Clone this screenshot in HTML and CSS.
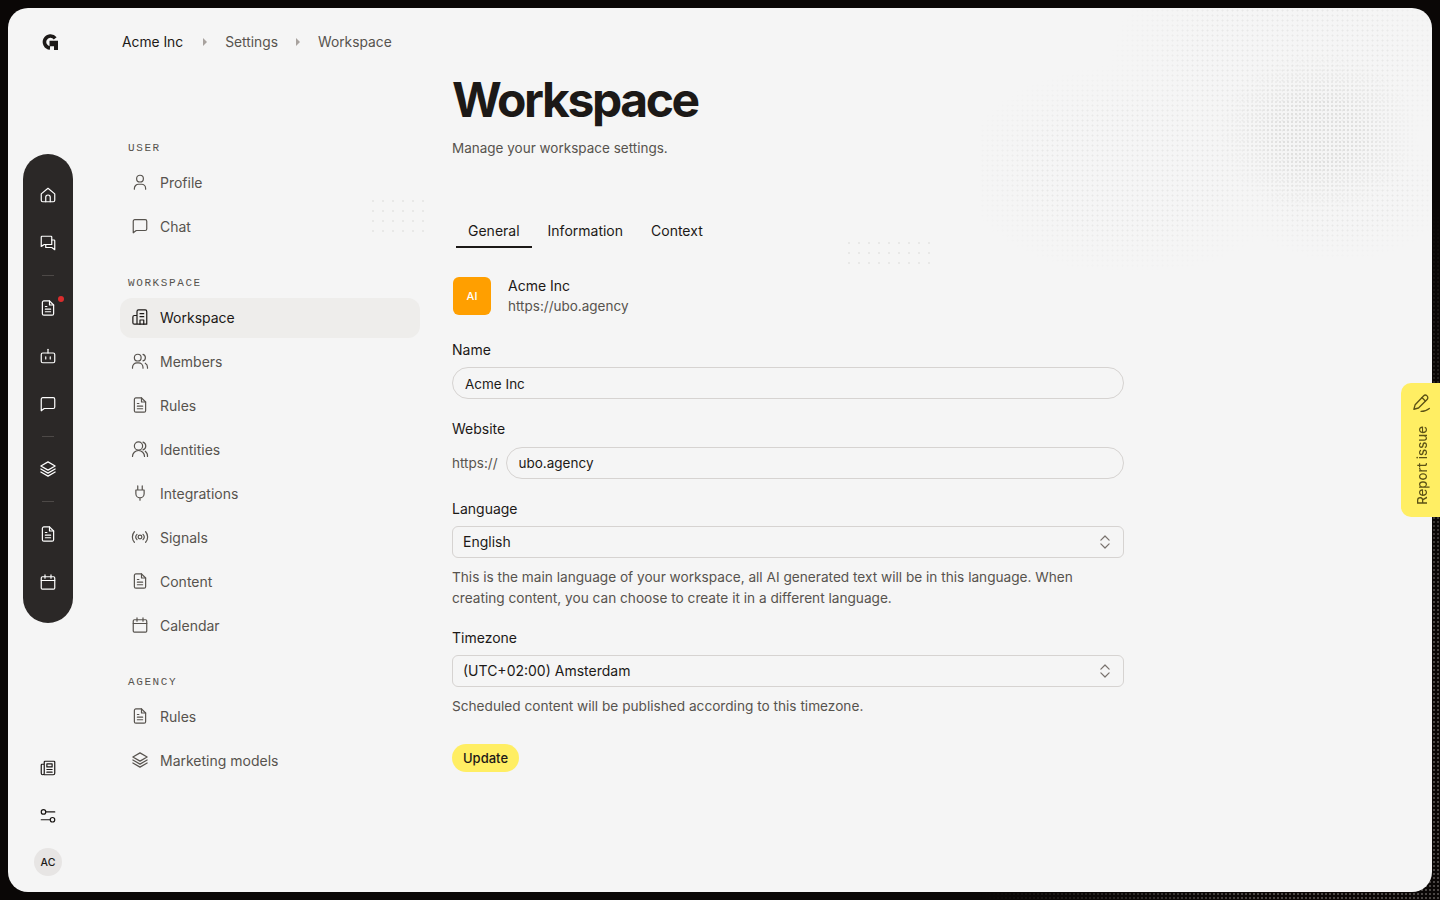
FILE: index.html
```html
<!DOCTYPE html>
<html lang="en">
<head>
  <meta charset="UTF-8" />
  <title>Workspace settings</title>
  <meta name="viewport" content="width=device-width, initial-scale=1.0" />
  <link rel="stylesheet" href="styles.css">
</head>
<body>

  <svg class="sprite" width="0" height="0" aria-hidden="true">
    <symbol id="i-home" viewBox="0 0 24 24"><path d="M3 10.500 12 3l9 7.500V19a2 2 0 0 1-2 2H5a2 2 0 0 1-2-2z"/><path d="M9 21v-6a3 3 0 0 1 6 0v6"/></symbol>
    <symbol id="i-chats" viewBox="0 0 24 24"><path d="M4 3h12a1 1 0 0 1 1 1v10H7l-4 2.500V4a1 1 0 0 1 1-1z"/><path d="M17 8h3a1 1 0 0 1 1 1v12l-4-3H9v-4"/></symbol>
    <symbol id="i-file" viewBox="0 0 24 24"><path d="M14 2.500H6.500a2 2 0 0 0-2 2v15a2 2 0 0 0 2 2h11a2 2 0 0 0 2-2V8z"/><path d="M14 2.500V8h5.500M8.500 10h2M8.500 13.500h7M8.500 17h7"/></symbol>
    <symbol id="i-bot" viewBox="0 0 24 24"><path d="M12 8V3"/><rect x="3" y="8" width="18" height="13" rx="2"/><path d="M9 13v3M15 13v3"/></symbol>
    <symbol id="i-chat" viewBox="0 0 24 24"><path d="M5 3.500h14a2 2 0 0 1 2 2V16a2 2 0 0 1-2 2H7l-4 3V5.500a2 2 0 0 1 2-2z"/></symbol>
    <symbol id="i-layers" viewBox="0 0 24 24"><path d="M12 2.500 2.500 8 12 13.500 21.500 8z"/><path d="m2.500 12 9.500 5.500 9.500-5.500M2.500 16l9.500 5.500 9.500-5.500"/></symbol>
    <symbol id="i-calendar" viewBox="0 0 24 24"><rect x="3" y="5" width="18" height="16.500" rx="1.500"/><path d="M8 2.500V7M16 2.500V7M3 10h18"/></symbol>
    <symbol id="i-news" viewBox="0 0 24 24"><path d="M7 21h12a2 2 0 0 0 2-2V4a1 1 0 0 0-1-1H8a1 1 0 0 0-1 1v15a2 2 0 0 1-4 0V8a1 1 0 0 1 1-1h3"/><rect x="10.500" y="6.500" width="7" height="4"/><path d="M10.500 14h7M10.500 17.500h7"/></symbol>
    <symbol id="i-sliders" viewBox="0 0 24 24"><circle cx="6" cy="6.500" r="3"/><path d="M9 6.500h12M3 17h12"/><circle cx="18" cy="17" r="3"/></symbol>
    <symbol id="i-user" viewBox="0 0 24 24"><circle cx="12" cy="7.500" r="4.500"/><path d="M4.500 21.500v-1a5.500 5.500 0 0 1 5.500-5.500h4a5.500 5.500 0 0 1 5.500 5.500v1"/></symbol>
    <symbol id="i-building" viewBox="0 0 24 24"><path d="M8 21.500V4.500a2 2 0 0 1 2-2h9a2 2 0 0 1 2 2v17zM8 10H4.500a2 2 0 0 0-2 2v7.500a2 2 0 0 0 2 2H8"/><path d="M12 7.500h5M12 11.500h5M12 21.500V16h5v5.500"/></symbol>
    <symbol id="i-members" viewBox="0 0 24 24"><circle cx="9" cy="7.500" r="4.500"/><path d="M2 21.500v-1a6 6 0 0 1 6-6h2a6 6 0 0 1 6 6v1M16 3.200a4.500 4.500 0 0 1 0 8.600M19 15a6 6 0 0 1 3 5.500v1"/></symbol>
    <symbol id="i-identity" viewBox="0 0 24 24"><circle cx="10" cy="8" r="5.500"/><path d="M2 22a8 8 0 0 1 16 0M16 2.800a5.500 5.500 0 0 1 0 10.400M19 15a8 8 0 0 1 3 7"/></symbol>
    <symbol id="i-plug" viewBox="0 0 24 24"><path d="M9 2.500V8M15 2.500V8M6.500 8h11v5a5.500 5.500 0 0 1-11 0zM12 18.500v3"/></symbol>
    <symbol id="i-signal" viewBox="0 0 24 24"><circle cx="12" cy="12" r="2.500"/><path d="M4.500 5a10.500 10.500 0 0 0 0 14M19.500 5a10.500 10.500 0 0 1 0 14M8 8.500a5 5 0 0 0 0 7M16 8.500a5 5 0 0 1 0 7"/></symbol>
    <symbol id="i-updown" viewBox="0 0 24 24"><path d="m6.500 9.500 5.500-5.500 5.500 5.500M6.500 14.500 12 20l5.500-5.500"/></symbol>
    <symbol id="i-pencil" viewBox="0 0 24 24"><path d="M15 3.500a3 3 0 0 1 4.300 4.200L9 18l-5.500 1.500L5 14z"/><path d="m13 5.500 4.300 4.200M12 22c4 0 7-1 10-3.500"/></symbol>
  </svg>

  <div class="edge-dots"></div>

  <div class="shell">
    <div class="dots dots-main"></div>
    <div class="dots dots-core"></div>
    <div class="dots dots-small-a"></div>
    <div class="dots dots-small-b"></div>

    <aside class="rail">
      <svg class="logo" viewBox="0 0 16 16">
        <path class="logo-arc" d="M13.200 4.300A6 6 0 1 0 8 14"/>
        <path class="logo-block" d="M7.500 6.800H16V16h-4v-3.800H7.500z"/>
      </svg>

      <nav class="pill">
        <a class="pill-btn"><svg class="icon"><use href="#i-home"/></svg></a>
        <a class="pill-btn"><svg class="icon"><use href="#i-chats"/></svg></a>
        <div class="pill-sep"></div>
        <a class="pill-btn has-dot"><svg class="icon"><use href="#i-file"/></svg></a>
        <a class="pill-btn"><svg class="icon"><use href="#i-bot"/></svg></a>
        <a class="pill-btn"><svg class="icon"><use href="#i-chat"/></svg></a>
        <div class="pill-sep"></div>
        <a class="pill-btn"><svg class="icon"><use href="#i-layers"/></svg></a>
        <div class="pill-sep"></div>
        <a class="pill-btn"><svg class="icon"><use href="#i-file"/></svg></a>
        <a class="pill-btn"><svg class="icon"><use href="#i-calendar"/></svg></a>
      </nav>

      <div class="rail-tools">
        <a class="tool-btn"><svg class="icon"><use href="#i-news"/></svg></a>
        <a class="tool-btn"><svg class="icon"><use href="#i-sliders"/></svg></a>
        <div class="avatar">AC</div>
      </div>
    </aside>

    <div class="page">
      <div class="crumbs">
        <span class="crumb crumb-first">Acme Inc</span>
        <span class="crumb-sep"></span>
        <span class="crumb">Settings</span>
        <span class="crumb-sep"></span>
        <span class="crumb">Workspace</span>
      </div>

      <div class="columns">
        <nav class="side">
          <div class="side-label">USER</div>
          <a class="side-item"><svg class="icon"><use href="#i-user"/></svg>Profile</a>
          <a class="side-item"><svg class="icon"><use href="#i-chat"/></svg>Chat</a>

          <div class="side-label">WORKSPACE</div>
          <a class="side-item active"><svg class="icon"><use href="#i-building"/></svg>Workspace</a>
          <a class="side-item"><svg class="icon"><use href="#i-members"/></svg>Members</a>
          <a class="side-item"><svg class="icon"><use href="#i-file"/></svg>Rules</a>
          <a class="side-item"><svg class="icon"><use href="#i-identity"/></svg>Identities</a>
          <a class="side-item"><svg class="icon"><use href="#i-plug"/></svg>Integrations</a>
          <a class="side-item"><svg class="icon"><use href="#i-signal"/></svg>Signals</a>
          <a class="side-item"><svg class="icon"><use href="#i-file"/></svg>Content</a>
          <a class="side-item"><svg class="icon"><use href="#i-calendar"/></svg>Calendar</a>

          <div class="side-label">AGENCY</div>
          <a class="side-item"><svg class="icon"><use href="#i-file"/></svg>Rules</a>
          <a class="side-item"><svg class="icon"><use href="#i-layers"/></svg>Marketing models</a>
        </nav>

        <main class="main">
          <h1>Workspace</h1>
          <p class="lead">Manage your workspace settings.</p>

          <div class="tabs">
            <a class="tab active">General</a>
            <a class="tab">Information</a>
            <a class="tab">Context</a>
          </div>

          <div class="org">
            <div class="org-badge">AI</div>
            <div>
              <div class="org-name">Acme Inc</div>
              <div class="org-url">https://ubo.agency</div>
            </div>
          </div>

          <label class="field-label first">Name</label>
          <input class="text-input" type="text" value="Acme Inc" />

          <label class="field-label">Website</label>
          <div class="url-row">
            <span class="url-prefix">https://</span>
            <input class="text-input" type="text" value="ubo.agency" />
          </div>

          <label class="field-label">Language</label>
          <div class="select-wrap">
            <select class="select"><option>English</option></select>
            <svg class="select-icon"><use href="#i-updown"/></svg>
          </div>
          <p class="help">This is the main language of your workspace, all AI generated text will be in this language. When creating content, you can choose to create it in a different language.</p>

          <label class="field-label">Timezone</label>
          <div class="select-wrap">
            <select class="select"><option>(UTC+02:00) Amsterdam</option></select>
            <svg class="select-icon"><use href="#i-updown"/></svg>
          </div>
          <p class="help">Scheduled content will be published according to this timezone.</p>

          <button class="update-btn">Update</button>
        </main>
      </div>
    </div>
  </div>

  <a class="report">
    <svg class="report-icon"><use href="#i-pencil"/></svg>
    <span class="report-text">Report issue</span>
  </a>

</body>
</html>
```

FILE: styles.css
```css
* {
  box-sizing: border-box;
}

html, body {
  height: 100%;
}

body {
  margin: 0;
  padding: 8px;
  background: #0a0706;
  font-family: Inter, "Noto Sans", sans-serif;
  font-size: 14px;
  color: #1c1917;
  overflow: hidden;
  position: relative;
}

.sprite {
  position: absolute;
}

svg use {
  fill: none;
  stroke: currentColor;
  stroke-width: 1.600;
  stroke-linecap: round;
  stroke-linejoin: round;
}

.icon {
  width: 18px;
  height: 18px;
  flex: none;
}

.edge-dots {
  position: absolute;
  right: 0;
  bottom: 0;
  width: 460px;
  height: 700px;
  background-image: radial-gradient(circle, #4a4644 0.8px, transparent 1px);
  background-size: 4px 4px;
  -webkit-mask-image: radial-gradient(ellipse 460px 700px at 100% 100%, #000 40%, transparent 100%);
  mask-image: radial-gradient(ellipse 460px 700px at 100% 100%, #000 40%, transparent 100%);
}

/* outer window */
.shell {
  position: relative;
  display: flex;
  height: 884px;
  background: #f5f5f5;
  border-radius: 20px;
  overflow: hidden;
}

.dots {
  position: absolute;
  background-image: radial-gradient(circle, #e8e8e7 0.9px, transparent 1.100px);
  pointer-events: none;
}

.dots-main {
  left: 972px;
  top: 0;
  width: 452px;
  height: 262px;
  background-size: 5px 5px;
  -webkit-mask-image:
    radial-gradient(ellipse 180px 110px at 310px 52px, #000 55%, transparent 100%),
    radial-gradient(ellipse 170px 105px at 150px 162px, #000 55%, transparent 100%),
    radial-gradient(ellipse 110px 70px at 360px 182px, #000 55%, transparent 100%);
  mask-image:
    radial-gradient(ellipse 180px 110px at 310px 52px, #000 55%, transparent 100%),
    radial-gradient(ellipse 170px 105px at 150px 162px, #000 55%, transparent 100%),
    radial-gradient(ellipse 110px 70px at 360px 182px, #000 55%, transparent 100%);
}

.dots-core {
  left: 1190px;
  top: 20px;
  width: 240px;
  height: 210px;
  background-image: radial-gradient(circle, #e0e0df 1px, transparent 1.300px);
  background-size: 4px 4px;
  -webkit-mask-image: radial-gradient(ellipse 100px 80px at 50% 50%, #000 40%, transparent 100%);
  mask-image: radial-gradient(ellipse 100px 80px at 50% 50%, #000 40%, transparent 100%);
}

.dots-small-a {
  left: 360px;
  top: 188px;
  width: 56px;
  height: 40px;
  background-size: 10px 10px;
}

.dots-small-b {
  left: 836px;
  top: 230px;
  width: 90px;
  height: 26px;
  background-size: 10px 10px;
}

/* left rail */
.rail {
  position: relative;
  width: 80px;
  display: flex;
  flex-direction: column;
  align-items: center;
  flex: none;
}

.logo {
  width: 16px;
  height: 16px;
  margin: 26px 0 0 4px;
  flex: none;
}

.logo-arc {
  fill: none;
  stroke: #1c1917;
  stroke-width: 3.600;
}

.logo-block {
  fill: #1c1917;
}

.pill {
  width: 50px;
  height: 469px;
  margin-top: 104px;
  padding: 17px 0;
  background: #2b2827;
  border-radius: 25px;
  display: flex;
  flex-direction: column;
  align-items: center;
  color: #fff;
}

.pill-btn {
  position: relative;
  width: 48px;
  height: 48px;
  display: flex;
  align-items: center;
  justify-content: center;
  flex: none;
}

.has-dot::after {
  content: "";
  position: absolute;
  top: 12px;
  right: 8px;
  width: 6px;
  height: 6px;
  border-radius: 50%;
  background: #d92d2d;
}

.pill-sep {
  width: 12px;
  height: 1px;
  margin: 8px 0;
  background: #4d4947;
  flex: none;
}

.rail-tools {
  margin-top: auto;
  padding-bottom: 16px;
  display: flex;
  flex-direction: column;
  align-items: center;
  color: #1c1917;
}

.tool-btn {
  width: 48px;
  height: 48px;
  display: flex;
  align-items: center;
  justify-content: center;
}

.avatar {
  width: 28px;
  height: 28px;
  margin-top: 8px;
  border-radius: 50%;
  background: #e7e5e4;
  display: flex;
  align-items: center;
  justify-content: center;
  font-size: 10.500px;
  font-weight: 500;
}

/* page */
.page {
  flex: 1;
  min-width: 0;
  display: flex;
  flex-direction: column;
}

.crumbs {
  height: 68px;
  padding-left: 34px;
  display: flex;
  align-items: center;
  gap: 18px;
  flex: none;
}

.crumb {
  font-size: 13.800px;
  color: #57534e;
  line-height: 20px;
}

.crumb-first {
  margin-right: 2px;
  color: #1c1917;
}

.crumb-sep {
  width: 0;
  height: 0;
  border-left: 4px solid #a8a29e;
  border-top: 4px solid transparent;
  border-bottom: 4px solid transparent;
}

.columns {
  display: flex;
  position: relative;
}

/* settings nav */
.side {
  width: 300px;
  margin-left: 32px;
  padding-top: 66px;
  flex: none;
}

.side-label {
  height: 12px;
  margin: 30px 0 9px 8px;
  font-family: "Liberation Mono", monospace;
  font-size: 11px;
  line-height: 12px;
  letter-spacing: 1.600px;
  color: #57534e;
}

.side-label:first-child {
  margin-top: 0;
}

.side-item {
  height: 40px;
  margin-bottom: 4px;
  padding: 0 0 2px 11px;
  display: flex;
  align-items: center;
  gap: 11px;
  border-radius: 12px;
  color: #57534e;
}

.side-item.active {
  background: #eeedeb;
  color: #1c1917;
}

/* main column */
.main {
  width: 672px;
  margin-left: 32px;
  flex: none;
}

h1 {
  margin: 0;
  font-size: 48px;
  line-height: 48px;
  font-weight: 700;
  letter-spacing: -0.05em;
  color: #1c1917;
}

.lead {
  margin: 14px 0 0;
  font-size: 13.500px;
  line-height: 20px;
  color: #57534e;
}

.tabs {
  margin: 56px 0 0 4px;
  display: flex;
  gap: 4px;
}

.tab {
  height: 34px;
  padding: 0 12px;
  display: flex;
  align-items: center;
  border-bottom: 2px solid transparent;
}

.tab.active {
  border-bottom-color: #1c1917;
}

.org {
  margin: 28px 0 0 1px;
  display: flex;
  align-items: center;
  gap: 17px;
}

.org-badge {
  width: 38px;
  height: 38px;
  border-radius: 6px;
  background: #ff9f00;
  color: #fff;
  font-size: 11px;
  font-weight: 500;
  display: flex;
  align-items: center;
  justify-content: center;
}

.org-name, .org-url {
  line-height: 20px;
}

.org-url {
  font-size: 13.500px;
  color: #57534e;
}

.field-label {
  display: block;
  margin: 20px 0 7px;
  line-height: 20px;
  font-weight: 430;
  font-size: 14px;
}

.field-label.first {
  margin-top: 24px;
}

.help + .field-label {
  margin-top: 19px;
}

.text-input {
  display: block;
  width: 100%;
  height: 32px;
  padding: 2px 12px 0;
  background: transparent;
  border: 1px solid #d6d3d1;
  border-radius: 16px;
  font: inherit;
  font-size: 13.500px;
  color: #1c1917;
  outline: none;
}

.url-row {
  margin-top: 8px;
  display: flex;
  align-items: center;
  gap: 8px;
}

.url-prefix {
  font-size: 13.500px;
  color: #57534e;
}

.url-row .text-input {
  flex: 1;
  width: auto;
  min-width: 0;
  padding-top: 0;
}

.select-wrap {
  position: relative;
}

.select {
  display: block;
  width: 100%;
  height: 32px;
  padding: 0 10px 2px;
  background: transparent;
  border: 1px solid #d6d3d1;
  border-radius: 6px;
  font: inherit;
  color: #1c1917;
  -webkit-appearance: none;
  appearance: none;
  outline: none;
}

.select-icon {
  position: absolute;
  top: 7px;
  right: 10px;
  width: 18px;
  height: 18px;
  color: #78716c;
  pointer-events: none;
}

.help {
  margin: 9px 0 0;
  font-size: 13.650px;
  line-height: 21px;
  color: #57534e;
}

.update-btn {
  display: block;
  height: 28px;
  margin-top: 27px;
  padding: 0 11px;
  background: #ffee63;
  border: none;
  border-radius: 14px;
  font: inherit;
  font-size: 13px;
  font-weight: 450;
  color: #1c1917;
}

/* floating report tab */
.report {
  position: absolute;
  right: 0;
  top: 383px;
  width: 39px;
  height: 134px;
  padding-top: 10px;
  background: #ffee63;
  border-radius: 10px 0 0 10px;
  display: flex;
  flex-direction: column;
  align-items: center;
  gap: 13px;
  color: #5c5216;
}

.report-icon {
  width: 20px;
  height: 20px;
  flex: none;
}

.report-text {
  margin-left: 2px;
  writing-mode: vertical-rl;
  transform: rotate(180deg);
  font-size: 13.200px;
  font-weight: 450;
  line-height: 16px;
}
```
